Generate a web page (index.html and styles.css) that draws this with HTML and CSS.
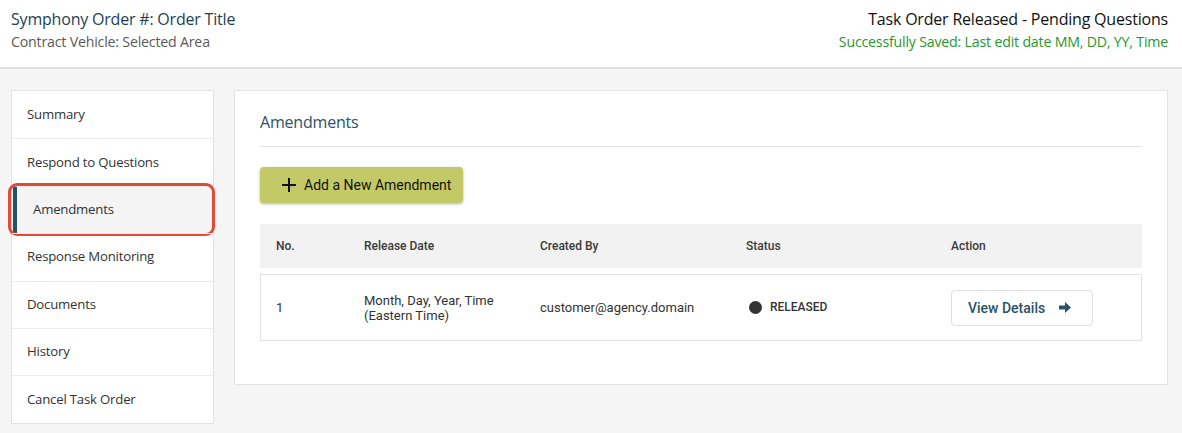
FILE: index.html
```html
<!DOCTYPE html>
<html>
<head>
<meta charset="utf-8">
<link rel="stylesheet" href="styles.css">
</head>
<body>
<header class="top">
  <div class="top-left">
    <div class="title">Symphony Order #: Order Title</div>
    <div class="subtitle">Contract Vehicle: Selected Area</div>
  </div>
  <div class="top-right">
    <div class="status-title">Task Order Released - Pending Questions</div>
    <div class="saved">Successfully Saved: Last edit date MM, DD, YY, Time</div>
  </div>
</header>
<div class="layout">
  <nav class="sidebar">
    <div class="nav-item">Summary</div>
    <div class="nav-item">Respond to Questions</div>
    <div class="nav-item active">Amendments<span class="highlight"></span></div>
    <div class="nav-item">Response Monitoring</div>
    <div class="nav-item">Documents</div>
    <div class="nav-item">History</div>
    <div class="nav-item">Cancel Task Order</div>
  </nav>
  <main class="panel">
    <h2 class="panel-title">Amendments</h2>
    <button class="add-btn">
      <svg class="plus" width="14" height="14" viewBox="0 0 14 14"><path d="M7 0v14M0 7h14" stroke="#111" stroke-width="2"/></svg>
      Add a New Amendment
    </button>
    <div class="table">
      <div class="row head">
        <div class="c1">No.</div>
        <div class="c2">Release Date</div>
        <div class="c3">Created By</div>
        <div class="c4">Status</div>
        <div class="c5">Action</div>
      </div>
      <div class="row body">
        <div class="c1">1</div>
        <div class="c2">Month, Day, Year, Time<br>(Eastern Time)</div>
        <div class="c3">customer@agency.domain</div>
        <div class="c4"><span class="dot"></span><span class="released">RELEASED</span></div>
        <div class="c5">
          <button class="view-btn">View Details
            <svg class="arrow" width="12" height="11" viewBox="0 0 12 11"><path d="M0 3.5h6V0l6 5.5-6 5.5V7.5H0z" fill="#2b5267"/></svg>
          </button>
        </div>
      </div>
    </div>
  </main>
</div>
</body>
</html>
```
FILE: styles.css
```css
* { box-sizing: border-box; }
html, body { margin: 0; padding: 0; }
body {
  background: #f5f5f5;
  font-family: "Open Sans", "Noto Sans", sans-serif;
  width: 1182px;
  height: 433px;
  overflow: hidden;
}
.top {
  background: #fff;
  height: 69px;
  border-bottom: 2px solid #e2e2e2;
  display: flex;
  justify-content: space-between;
  padding: 7px 14px 0 11px;
}
.title {
  font-size: 16px;
  color: #1e3f52;
  line-height: 24px;
  letter-spacing: -0.2px;
}
.subtitle {
  font-size: 14.2px;
  color: #5a5a5a;
  line-height: 20px;
  margin-top: 1px;
  letter-spacing: -0.2px;
}
.top-right { text-align: right; }
.status-title {
  font-size: 16px;
  color: #111;
  line-height: 24px;
  letter-spacing: -0.2px;
}
.saved {
  font-size: 14.2px;
  color: #2a9630;
  line-height: 20px;
  margin-top: 1px;
  letter-spacing: -0.2px;
}
.layout {
  display: flex;
  align-items: flex-start;
  padding: 21px 14px 0 11px;
  gap: 20px;
}
.sidebar {
  width: 203px;
  flex: none;
  background: #fff;
  border: 1px solid #e4e4e4;
}
.nav-item {
  position: relative;
  height: 47.4px;
  display: flex;
  align-items: center;
  padding-left: 15px;
  padding-bottom: 2px;
  font-size: 13.2px;
  color: #333;
  border-top: 1px solid #ececec;
  letter-spacing: -0.2px;
}
.nav-item:first-child { border-top: none; }
.nav-item.active {
  background: #f4f4f4;
  border-left: 4px solid #24546b;
  padding-left: 16px;
  margin-left: 1px;
}
.highlight {
  position: absolute;
  left: -9px;
  right: -2px;
  top: -4px;
  bottom: -3px;
  border: 3px solid #e24a37;
  border-radius: 9px;
  pointer-events: none;
}
.panel {
  flex: 1;
  height: 295px;
  background: #fff;
  border: 1px solid #e4e4e4;
  padding: 0 25px;
}
.panel-title {
  margin: 0;
  font-weight: normal;
  font-size: 16px;
  color: #2b5267;
  line-height: 20px;
  padding: 21px 0 14px;
  border-bottom: 1px solid #e2e2e2;
  letter-spacing: -0.2px;
}
.add-btn {
  margin-top: 20px;
  height: 36px;
  width: 203px;
  background: #c4c967;
  border: none;
  border-radius: 4px;
  box-shadow: 0 1px 3px rgba(0,0,0,0.3);
  display: flex;
  align-items: center;
  padding: 0 0 0 22px;
  gap: 8px;
  font-family: Roboto, sans-serif;
  font-size: 14px;
  color: #111;
}
.table { margin-top: 21px; }
.row {
  display: flex;
  align-items: center;
  font-family: Roboto, sans-serif;
  color: #333;
}
.row.head {
  height: 44px;
  background: #f2f2f2;
  font-size: 12px;
  font-weight: 500;
  color: #3a3a3a;
}
.row.body {
  margin-top: 6px;
  height: 67px;
  border: 1px solid #e2e2e2;
  font-size: 13px;
  line-height: 15px;
}
.c1 { width: 104px; padding-left: 16px; }
.c2 { width: 176px; }
.c3 { width: 206px; }
.c4 { width: 205px; display: flex; align-items: center; }
.c5 { flex: 1; }
.row.body .c1 { padding-left: 15px; width: 103px; }
.dot {
  width: 13px;
  height: 13px;
  border-radius: 50%;
  background: #333;
  margin-left: 3px;
  margin-right: 8px;
}
.released {
  font-size: 12px;
  font-weight: 500;
  color: #333;
}
.view-btn {
  width: 142px;
  height: 36px;
  border: 1px solid #dedede;
  border-radius: 4px;
  background: #fff;
  display: flex;
  align-items: center;
  padding: 0 0 0 16px;
  gap: 14px;
  font-family: Roboto, sans-serif;
  font-size: 14px;
  font-weight: 500;
  color: #2b5267;
}
```
